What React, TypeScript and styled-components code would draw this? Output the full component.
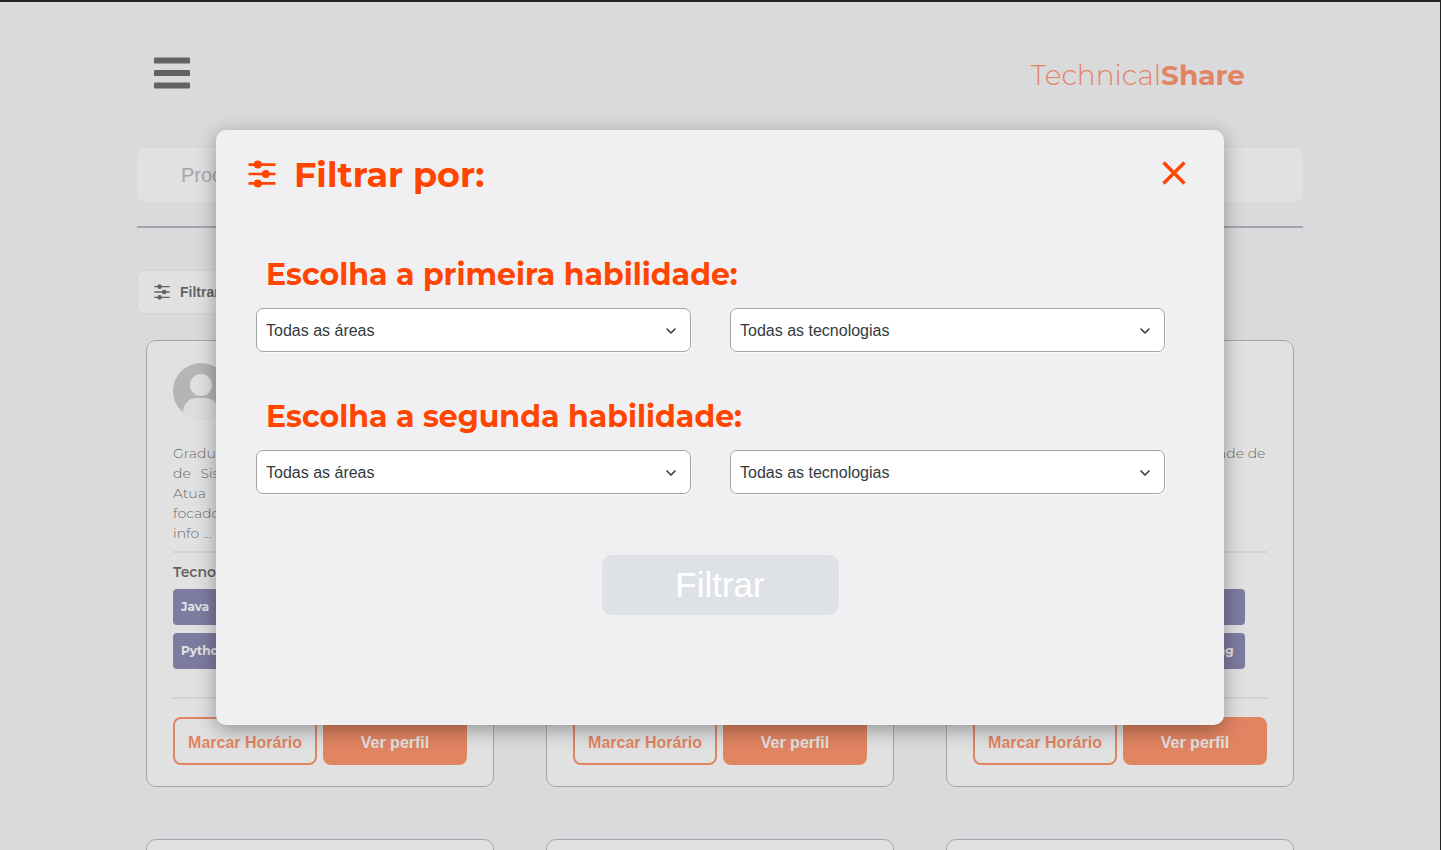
import React from "react";
import styled, { createGlobalStyle, css } from "styled-components";

const display = `Montserrat, Inter, "Open Sans", sans-serif`;
const body = `Arial, "Liberation Sans", sans-serif`;
const orange = "#ff4500";
const slate = "#828a96";

const GlobalStyle = createGlobalStyle`
  * { box-sizing: border-box; }
  body { margin: 0; background: #f0f0f4; font-family: ${body}; }
  h1, h2, p, ul { margin: 0; padding: 0; }
  button, input, select { font-family: ${body}; margin: 0; }
`;

const Page = styled.div`
  position: relative;
  height: 100vh;
  overflow: hidden;
  border-top: 2px solid #232325;
  border-right: 1px solid #232325;
  background: #f0f0f4;
`;

const Content = styled.div`
  padding: 0 137px;
`;

const Header = styled.header`
  display: flex;
  align-items: center;
  justify-content: space-between;
  height: 146px;
  padding: 0 58px 0 17px;
`;

const MenuButton = styled.button`
  display: flex;
  margin-bottom: 4px;
  padding: 0;
  border: 0;
  background: none;
`;

const Logo = styled.a`
  color: ${orange};
  font: 300 28px/36px ${display};
  text-decoration: none;

  strong { font-weight: 700; }
`;

const Search = styled.input`
  display: block;
  width: 100%;
  height: 54px;
  padding: 0 44px;
  border: 0;
  border-radius: 8px;
  background: #fff;
  font-size: 20px;

  &::placeholder { color: ${slate}; opacity: 1; }
`;

const Divider = styled.hr`
  height: 2px;
  margin: 24px 0 42px;
  border: 0;
  background: ${slate};
`;

const FilterButton = styled.button`
  display: flex;
  align-items: center;
  gap: 10px;
  height: 44px;
  padding: 0 16px;
  border: 1px solid #e6e6e8;
  border-radius: 8px;
  background: #fff;
  color: #000;
  font-size: 14px;
  font-weight: 700;
`;

const Cards = styled.main`
  display: grid;
  grid-template-columns: repeat(3, 1fr);
  gap: 52px;
  padding: 26px 9px 52px;
`;

const Card = styled.article`
  padding: 22px 26px 21px;
  border: 1px solid ${slate};
  border-radius: 10px;
  background: #fff;
  color: #000;
`;

const Avatar = styled.svg`
  display: block;
  width: 56px;
  height: 56px;
`;

const Bio = styled.p`
  height: 110px;
  margin-top: 24px;
  border-bottom: 2px solid #e0e0e0;
  font: 300 14px/20px ${display};
`;

const BioLine = styled.span`
  display: block;
  white-space: nowrap;

  &:not(:last-child) { text-align-last: justify; }
`;

const SkillTitle = styled.h2`
  margin-top: 9px;
  font: 600 14px/20px ${display};
`;

const Skills = styled.ul`
  display: grid;
  grid-template-columns: 80px 82px 94px;
  gap: 8px;
  height: 108px;
  align-content: start;
  margin-top: 7px;
  list-style: none;
`;

const Skill = styled.li`
  height: 36px;
  padding: 0 8px;
  border-radius: 4px;
  background: #37327d;
  color: #fff;
  font: 700 12px/36px ${display};
  white-space: nowrap;
`;

const SkillArea = styled.section`
  margin-bottom: 18px;
  border-bottom: 2px solid #e0e0e0;
`;

const Actions = styled.div`
  display: grid;
  grid-template-columns: 1fr 1fr;
  gap: 6px;
`;

const Action = styled.button<{ $solid?: boolean }>`
  height: 48px;
  padding: 3px 0 0;
  border: 2px solid ${orange};
  border-radius: 8px;
  background: #fff;
  color: ${orange};
  font-size: 16px;
  font-weight: 700;
  white-space: nowrap;
  ${(p) => p.$solid && css`
    background: ${orange};
    color: #fff;
  `}
`;

const Overlay = styled.div`
  position: absolute;
  inset: 0;
  display: flex;
  align-items: flex-start;
  justify-content: center;
  padding-top: 128px;
  background: rgba(196, 196, 196, 0.5);
`;

const Dialog = styled.form`
  width: 70%;
  min-height: 70vh;
  padding: 24px 32px;
  border-radius: 10px;
  background: #f0f0f3;
  box-shadow: 0 5px 20px rgba(0, 0, 0, 0.35);
`;

const DialogHeader = styled.header`
  display: flex;
  align-items: center;
  gap: 18px;
  height: 40px;
  color: ${orange};
`;

const DialogTitle = styled.h1`
  flex: 1;
  padding-top: 2px;
  font: 700 35px/40px ${display};
`;

const CloseButton = styled.button`
  display: flex;
  margin: 0 6px 2px 0;
  padding: 0;
  border: 0;
  background: none;
  color: inherit;
`;

const Choice = styled.fieldset`
  min-width: 0;
  margin: 0 27px 46px 8px;
  padding: 0;
  border: 0;
`;

const Choices = styled.div`
  padding-top: 63px;
`;

const ChoiceTitle = styled.legend`
  padding: 0 10px 15px;
  color: ${orange};
  font: 700 30px/36px ${display};
  white-space: nowrap;

  ${Choice} + ${Choice} & { padding-top: 1px; }
`;

const SelectRow = styled.div`
  display: grid;
  grid-template-columns: 1fr 1fr;
  gap: 39px;
`;

const SelectBox = styled.div`
  position: relative;

  svg {
    position: absolute;
    top: 17px;
    right: 14px;
    pointer-events: none;
  }
`;

const Select = styled.select`
  display: block;
  appearance: none;
  width: 100%;
  height: 44px;
  padding: 0 9px;
  border: 1px solid #a3a3a6;
  border-radius: 7px;
  background: #fff;
  box-shadow: 1px 1px 0 #fafafa;
  color: #343a40;
  font-size: 16px;
`;

const Submit = styled.button`
  display: block;
  width: 237px;
  height: 60px;
  margin: 61px auto 0;
  border: 0;
  border-radius: 10px;
  background: #dee2e6;
  color: #fff;
  font-size: 35px;
`;

const Sliders = ({ size }: { size: number }) => (
  <svg width={size} height={size} viewBox="0 0 28 28" fill="none" stroke="currentColor" strokeWidth="2.6" aria-hidden="true">
    <path d="M.5 4.6h27M.5 14h27M.5 23.4h27" />
    <g fill="currentColor" stroke="none">
      <circle cx="9.8" cy="4.6" r="4" />
      <circle cx="17.8" cy="14" r="4" />
      <circle cx="9.8" cy="23.4" r="4" />
    </g>
  </svg>
);

const Chevron = () => (
  <svg width="12" height="12" viewBox="0 0 12 12" fill="none" stroke="#343a40" strokeWidth="1.6" strokeLinecap="round" strokeLinejoin="round" aria-hidden="true">
    <path d="M2 4l4 4 4-4" />
  </svg>
);

const Portrait = ({ id }: { id: string }) => (
  <Avatar viewBox="0 0 56 56" aria-hidden="true">
    <clipPath id={id}><circle cx="28" cy="28" r="28" /></clipPath>
    <g clipPath={`url(#${id})`}>
      <rect width="56" height="56" fill="#a6a6a6" />
      <circle cx="28" cy="22" r="11" fill="#fff" />
      <path d="M10 56v-6c0-9 6-15 14-15h8c8 0 14 6 14 15v6z" fill="#f6f6f6" />
    </g>
  </Avatar>
);

type Mentor = { bio: string[]; skills: string[] };

const mentors: Mentor[] = [
  {
    bio: [
      "Graduado no curso de Desenvolvimento",
      "de Sistemas na faculdade Impacta SP.",
      "Atua com desenvolvimento web",
      "focado em segurança de redes e da",
      "info ...",
    ],
    skills: ["Java", "Spring", "Docker", "Python", "React", "Networking"],
  },
  {
    bio: ["Desenvolvedora de sistemas web."],
    skills: ["Java", "Spring", "Docker", "Python", "React", "Networking"],
  },
  {
    bio: ["Estudante em Computação, Faculdade de"],
    skills: ["Java", "Spring", "SQL", "Python", "React", "Networking"],
  },
];

const SkillFilter = ({ title, name }: { title: string; name: string }) => (
  <Choice>
    <ChoiceTitle>{title}</ChoiceTitle>
    <SelectRow>
      {["áreas", "tecnologias"].map((kind) => (
        <SelectBox key={kind}>
          <Select aria-label={`${title} ${kind}`} name={`${name}-${kind}`}>
            <option>Todas as {kind}</option>
          </Select>
          <Chevron />
        </SelectBox>
      ))}
    </SelectRow>
  </Choice>
);

export default function App() {
  return (
    <Page>
      <GlobalStyle />
      <Content>
        <Header>
          <MenuButton type="button" aria-label="Menu">
            <svg width="36" height="32" viewBox="0 0 36 32" aria-hidden="true">
              <g fill="#000">
                <rect y="0.5" width="36" height="6" rx="1" />
                <rect y="13" width="36" height="6" rx="1" />
                <rect y="25.5" width="36" height="6" rx="1" />
              </g>
            </svg>
          </MenuButton>
          <Logo href="#">Technical<strong>Share</strong></Logo>
        </Header>
        <Search type="search" aria-label="Procurar" placeholder="Procurar mentor" />
        <Divider />
        <FilterButton type="button">
          <Sliders size={16} />
          Filtrar por
        </FilterButton>
        <Cards>
          {[...mentors, ...mentors].map((mentor, i) => (
            <Card key={i}>
              <Portrait id={`portrait-${i}`} />
              <Bio>
                {mentor.bio.map((line) => <BioLine key={line}>{line}</BioLine>)}
              </Bio>
              <SkillArea>
                <SkillTitle>Tecnologias:</SkillTitle>
                <Skills>
                  {mentor.skills.map((skill) => <Skill key={skill}>{skill}</Skill>)}
                </Skills>
              </SkillArea>
              <Actions>
                <Action type="button">Marcar Horário</Action>
                <Action type="button" $solid>Ver perfil</Action>
              </Actions>
            </Card>
          ))}
        </Cards>
      </Content>
      <Overlay>
        <Dialog role="dialog" aria-modal="true" aria-labelledby="filter-title">
          <DialogHeader>
            <Sliders size={28} />
            <DialogTitle id="filter-title">Filtrar por:</DialogTitle>
            <CloseButton type="button" aria-label="Fechar">
              <svg width="24" height="24" viewBox="0 0 24 24" fill="none" stroke="currentColor" strokeWidth="3.4" aria-hidden="true">
                <path d="M1.5 1.5l21 21M22.5 1.5l-21 21" />
              </svg>
            </CloseButton>
          </DialogHeader>
          <Choices>
            <SkillFilter title="Escolha a primeira habilidade:" name="primeira" />
            <SkillFilter title="Escolha a segunda habilidade:" name="segunda" />
          </Choices>
          <Submit type="submit" disabled>Filtrar</Submit>
        </Dialog>
      </Overlay>
    </Page>
  );
}
